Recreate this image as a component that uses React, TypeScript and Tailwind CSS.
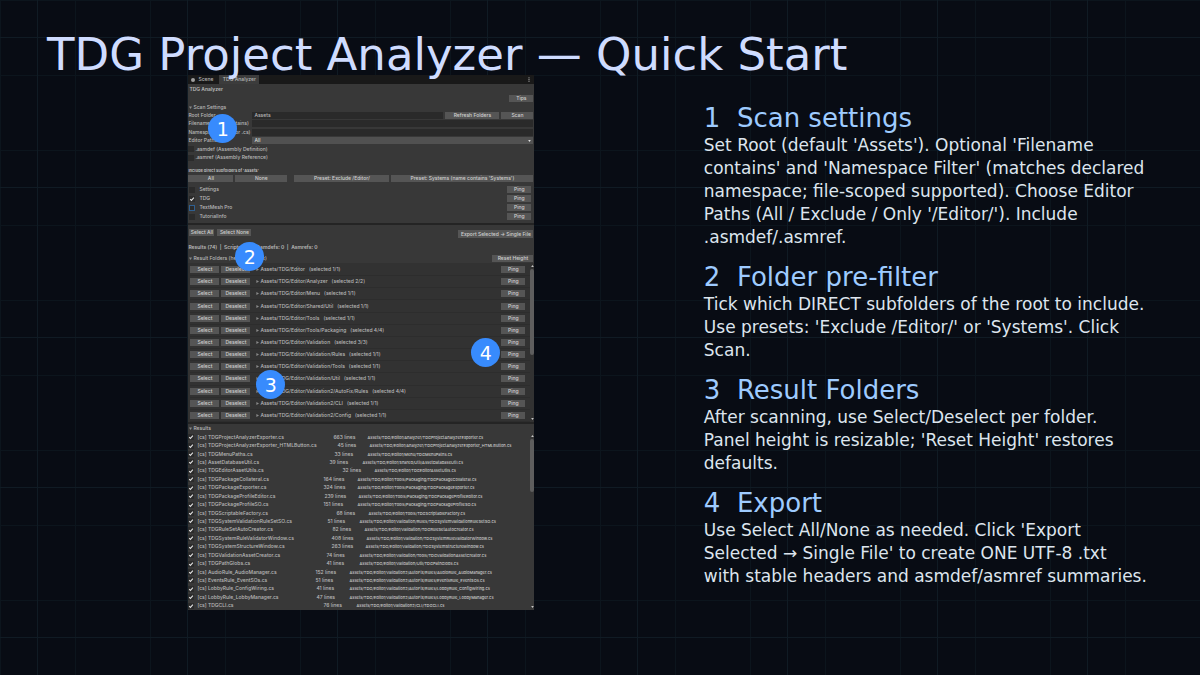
import type { ReactNode } from 'react'
import clsx from 'clsx'

const steps = [
  {
    title: 'Scan settings',
    text: "Set Root (default 'Assets'). Optional 'Filename contains' and 'Namespace Filter' (matches declared namespace; file-scoped supported). Choose Editor Paths (All / Exclude / Only '/Editor/'). Include .asmdef/.asmref.",
  },
  {
    title: 'Folder pre-filter',
    text: "Tick which DIRECT subfolders of the root to include. Use presets: 'Exclude /Editor/' or 'Systems'. Click Scan.",
  },
  {
    title: 'Result Folders',
    text: "After scanning, use Select/Deselect per folder. Panel height is resizable; 'Reset Height' restores defaults.",
  },
  {
    title: 'Export',
    text: "Use Select All/None as needed. Click 'Export Selected → Single File' to create ONE UTF-8 .txt with stable headers and asmdef/asmref summaries.",
  },
]

const subfolders = [
  { name: 'Settings', checked: false, focused: false },
  { name: 'TDG', checked: true, focused: false },
  { name: 'TextMesh Pro', checked: false, focused: true },
  { name: 'TutorialInfo', checked: false, focused: false },
]

const folders = [
  { path: 'Editor', selected: '1/1' },
  { path: 'Editor/Analyzer', selected: '2/2' },
  { path: 'Editor/Menu', selected: '1/1' },
  { path: 'Editor/Shared/Util', selected: '1/1' },
  { path: 'Editor/Tools', selected: '1/1' },
  { path: 'Editor/Tools/Packaging', selected: '4/4' },
  { path: 'Editor/Validation', selected: '3/3' },
  { path: 'Editor/Validation/Rules', selected: '1/1' },
  { path: 'Editor/Validation/Tools', selected: '1/1' },
  { path: 'Editor/Validation/Util', selected: '1/1' },
  { path: 'Editor/Validation2/AutoFix/Rules', selected: '4/4' },
  { path: 'Editor/Validation2/CLI', selected: '1/1' },
  { path: 'Editor/Validation2/Config', selected: '1/1' },
]

const files = [
  { name: 'TDGProjectAnalyzerExporter', dir: 'Editor/Analyzer', lines: 663, nameW: 136, linesW: 34 },
  { name: 'TDGProjectAnalyzerExporter_HTMLButton', dir: 'Editor/Analyzer', lines: 45, nameW: 140, linesW: 32 },
  { name: 'TDGMenuPaths', dir: 'Editor/Menu', lines: 33, nameW: 137, linesW: 33 },
  { name: 'AssetDatabaseUtil', dir: 'Editor/Shared/Util', lines: 39, nameW: 132, linesW: 33 },
  { name: 'TDGEditorAssetUtils', dir: 'Editor', lines: 32, nameW: 145, linesW: 32 },
  { name: 'TDGPackageCollateral', dir: 'Editor/Tools/Packaging', lines: 164, nameW: 126, linesW: 34 },
  { name: 'TDGPackageExporter', dir: 'Editor/Tools/Packaging', lines: 324, nameW: 126, linesW: 34 },
  { name: 'TDGPackageProfileEditor', dir: 'Editor/Tools/Packaging', lines: 239, nameW: 127, linesW: 34 },
  { name: 'TDGPackageProfileSO', dir: 'Editor/Tools/Packaging', lines: 151, nameW: 126, linesW: 34 },
  { name: 'TDGScriptableFactory', dir: 'Editor/Tools', lines: 68, nameW: 139, linesW: 32 },
  { name: 'TDGSystemValidationRuleSetSO', dir: 'Editor/Validation/Rules', lines: 51, nameW: 130, linesW: 32 },
  { name: 'TDGRuleSetAutoCreator', dir: 'Editor/Validation', lines: 82, nameW: 135, linesW: 32 },
  { name: 'TDGSystemRuleValidatorWindow', dir: 'Editor/Validation', lines: 408, nameW: 134, linesW: 35 },
  { name: 'TDGSystemStructureWindow', dir: 'Editor/Validation', lines: 263, nameW: 134, linesW: 34 },
  { name: 'TDGValidationAssetCreator', dir: 'Editor/Validation/Tools', lines: 74, nameW: 129, linesW: 33 },
  { name: 'TDGPathGlobs', dir: 'Editor/Validation/Util', lines: 41, nameW: 129, linesW: 33 },
  { name: 'AudioRule_AudioManager', dir: 'Editor/Validation2/AutoFix/Rules', lines: 152, nameW: 118, linesW: 34 },
  { name: 'EventsRule_EventSOs', dir: 'Editor/Validation2/AutoFix/Rules', lines: 51, nameW: 118, linesW: 34 },
  { name: 'LobbyRule_ConfigWiring', dir: 'Editor/Validation2/AutoFix/Rules', lines: 41, nameW: 119, linesW: 33 },
  { name: 'LobbyRule_LobbyManager', dir: 'Editor/Validation2/AutoFix/Rules', lines: 47, nameW: 119, linesW: 33 },
  { name: 'TDGCLI', dir: 'Editor/Validation2/CLI', lines: 76, nameW: 126, linesW: 33 },
]

function Btn({ className, children }: { className?: string; children: ReactNode }) {
  return (
    <button
      className={clsx(
        'flex h-[7px] shrink-0 items-center justify-center bg-[#555555] text-[#d0d0d0] whitespace-nowrap hover:bg-[#626262]',
        className,
      )}
    >
      {children}
    </button>
  )
}

function Tick({ id, checked, focused }: { id: string; checked?: boolean; focused?: boolean }) {
  return (
    <span className="relative flex size-[6px] shrink-0">
      <input
        id={id}
        type="checkbox"
        defaultChecked={checked}
        className={clsx(
          'peer size-[6px] appearance-none border bg-[#2b2b2b]',
          focused ? 'border-[#2f5f8f]' : 'border-[#2b2b2b]',
        )}
      />
      <svg
        viewBox="0 0 6 6"
        className="pointer-events-none absolute inset-0 hidden size-[6px] fill-none stroke-[#e0e0e0] peer-checked:block"
      >
        <path d="M1.2 3.2 2.4 4.4 4.9 1.6" strokeWidth="1.1" />
      </svg>
    </span>
  )
}

function Foldout({ open, children }: { open?: boolean; children?: ReactNode }) {
  return (
    <span className="flex items-center gap-px">
      <svg viewBox="0 0 4 4" className="size-[3px] shrink-0 fill-[#8a8a8a]">
        {open ? <path d="M0 .5h4L2 4z" /> : <path d="M.5 0v4L4 2z" />}
      </svg>
      {children}
    </span>
  )
}

function Scrollbar({ thumb }: { thumb: string }) {
  return (
    <div className="flex w-[4px] shrink-0 flex-col items-center justify-between py-[2px]">
      <svg viewBox="0 0 4 3" className="h-[2px] w-[3px] shrink-0 fill-[#c8c8c8]">
        <path d="M0 3h4L2 0z" />
      </svg>
      <div className="w-full flex-1 pt-[2px]">
        <div className={clsx('w-full rounded-[2px] bg-[#5e5e5e]', thumb)} />
      </div>
      <svg viewBox="0 0 4 3" className="h-[2px] w-[3px] shrink-0 fill-[#c8c8c8]">
        <path d="M0 0h4L2 3z" />
      </svg>
    </div>
  )
}

// numbered marker pinned over the editor window
function Pin({ n, className }: { n: number; className: string }) {
  return (
    <span
      className={clsx(
        'absolute flex size-[29px] items-center justify-center rounded-full bg-[#388bfd] pt-[2px] font-["DejaVu_Sans",sans-serif] text-[19px] font-normal text-white',
        className,
      )}
    >
      {n}
    </span>
  )
}

function ScanSettings() {
  return (
    <section className="pr-px">
      <div className="flex h-[11px] items-center pl-px font-semibold">TDG Analyzer</div>
      <div className="flex justify-end">
        <Btn className="w-[24px]">Tips</Btn>
      </div>
      <div className="mt-px flex h-[8px] items-center pl-px">
        <Foldout open>Scan Settings</Foldout>
      </div>
      <div className="grid h-[51px] auto-rows-fr items-center">
        <div className="flex items-center gap-px">
          <label htmlFor="root" className="w-[63px] shrink-0">Root Folder</label>
          <input id="root" defaultValue="Assets" className="h-[7px] min-w-0 flex-1 bg-[#2a2a2a] px-[2px]" />
          <Btn className="ml-px w-[54px]">Refresh Folders</Btn>
          <Btn className="ml-px w-[32px]">Scan</Btn>
        </div>
        <div className="flex items-center gap-px">
          <label htmlFor="filename" className="w-[63px] shrink-0 whitespace-nowrap">Filename Filter (contains)</label>
          <input id="filename" className="h-[7px] min-w-0 flex-1 bg-[#2a2a2a] px-[2px]" />
        </div>
        <div className="flex items-center gap-px">
          <label htmlFor="namespace" className="w-[63px] shrink-0 whitespace-nowrap">Namespace Filter (for .cs)</label>
          <input id="namespace" className="h-[7px] min-w-0 flex-1 bg-[#2a2a2a] px-[2px]" />
        </div>
        <div className="flex items-center gap-px">
          <label htmlFor="paths" className="w-[63px] shrink-0">Editor Paths</label>
          <div className="relative flex min-w-0 flex-1">
            <select id="paths" className="h-[7px] w-full appearance-none bg-[#515151] px-[2px] text-[#d8d8d8]">
              <option>All</option>
              <option>Exclude</option>
              <option>Only '/Editor/'</option>
            </select>
            <svg viewBox="0 0 4 3" className="pointer-events-none absolute top-[3px] right-[2px] h-[2px] w-[3px] fill-[#e0e0e0]">
              <path d="M0 0h4L2 3z" />
            </svg>
          </div>
        </div>
        <div className="flex items-center gap-px">
          <Tick id="asmdef" />
          <label htmlFor="asmdef">.asmdef (Assembly Definition)</label>
        </div>
        <div className="flex items-center gap-px">
          <Tick id="asmref" />
          <label htmlFor="asmref">.asmref (Assembly Reference)</label>
        </div>
      </div>

      <div className="mt-[4px] flex h-[8px] items-center text-[4px] font-bold">Include direct subfolders of 'Assets'</div>
      <div className="mt-px flex gap-[2px]">
        <Btn className="w-[45px]">All</Btn>
        <Btn className="w-[52px]">None</Btn>
        <Btn className="ml-[5px] w-[95px]">Preset: Exclude /Editor/</Btn>
        <Btn className="flex-1">Preset: Systems (name contains 'Systems')</Btn>
      </div>
      <ul className="mt-[3px] pb-[2px]">
        {subfolders.map((f) => (
          <li key={f.name} className="flex h-[9px] items-center gap-[4px] pr-[2px] pl-px">
            <Tick id={`sub-${f.name}`} checked={f.checked} focused={f.focused} />
            <label htmlFor={`sub-${f.name}`} className="flex-1">{f.name}</label>
            <Btn className="w-[24px]">Ping</Btn>
          </li>
        ))}
      </ul>
    </section>
  )
}

function ResultFolders() {
  return (
    <section>
      <div className="flex h-[14px] items-start gap-[3px] px-px pt-[4px]">
        <Btn className="w-[25px]">Select All</Btn>
        <Btn className="w-[34px]">Select None</Btn>
        <Btn className="mt-px ml-auto h-[8px] w-[75px]">Export Selected → Single File</Btn>
      </div>
      <div className="mt-[4px] flex h-[8px] items-center font-semibold whitespace-pre">
        {'Results (74)  |  Scripts: 74  |  Asmdefs: 0  |  Asmrefs: 0'}
      </div>
      <div className="mt-[3px] flex h-[9px] items-center justify-between px-px">
        <Foldout open>Result Folders (height: 360 px)</Foldout>
        <Btn className="w-[41px]">Reset Height</Btn>
      </div>
      <div className="flex h-[159px] bg-[#323232]">
        <ul className="grid min-w-0 flex-1 auto-rows-fr pt-px pl-[2px]">
          {folders.map((f) => (
            <li key={f.path} className="flex items-center gap-[2px] border-b border-[#2d2d2d] pr-[5px]">
              <Btn className="w-[29px]">Select</Btn>
              <Btn className="w-[29px]">Deselect</Btn>
              <div className="ml-[4px] flex-1 whitespace-pre">
                <Foldout>{`Assets/TDG/${f.path}   (selected ${f.selected})`}</Foldout>
              </div>
              <Btn className="w-[24px]">Ping</Btn>
            </li>
          ))}
        </ul>
        <Scrollbar thumb="h-[86px]" />
      </div>
    </section>
  )
}

function Results() {
  return (
    <section>
      <div className="flex h-[9px] items-center px-px">
        <Foldout open>Results</Foldout>
      </div>
      <div className="flex h-[177px]">
        <ul className="grid min-w-0 flex-1 auto-rows-fr">
          {files.map((f) => (
            <li key={f.name} className="flex items-center">
              <Tick id={`file-${f.name}`} checked />
              <label htmlFor={`file-${f.name}`} className="shrink-0 pl-[3px]" style={{ width: f.nameW + 3 }}>
                [cs] {f.name}.cs
              </label>
              <span className="shrink-0" style={{ width: f.linesW }}>
                {f.lines} lines
              </span>
              <span className="text-[4px] text-[#cccccc]">
                Assets/TDG/{f.dir}/{f.name}.cs
              </span>
            </li>
          ))}
        </ul>
        <Scrollbar thumb="h-[53px]" />
      </div>
    </section>
  )
}

function EditorWindow() {
  return (
    <div className='relative w-full max-w-[346px] self-start bg-[#383838] font-["Inter",sans-serif] text-[5px] leading-[7px] font-medium text-[#b8b8b8]'>
      <div className="flex h-[9px] items-stretch bg-[#191919]">
        <button className="flex items-center gap-[3px] px-[3px]">
          <span className="size-[4px] rounded-full bg-[#a0a0a0]" />
          Scene
        </button>
        <button className="ml-[3px] w-[40px] bg-[#3c3c3c]">TDG Analyzer</button>
        <button aria-label="Window menu" className="ml-auto flex items-center px-[4px]">
          <svg viewBox="0 0 2 6" className="h-[5px] w-[2px] fill-[#b8b8b8]">
            <circle cx="1" cy="1" r=".7" />
            <circle cx="1" cy="3" r=".7" />
            <circle cx="1" cy="5" r=".7" />
          </svg>
        </button>
      </div>
      <ScanSettings />
      <hr className="h-[2px] border-0 bg-[#242424]" />
      <ResultFolders />
      <hr className="h-[2px] border-0 bg-[#242424]" />
      <Results />
      <Pin n={1} className="top-[39px] left-[20px]" />
      <Pin n={2} className="top-[167px] left-[47px]" />
      <Pin n={3} className="top-[295px] left-[68px]" />
      <Pin n={4} className="top-[263px] left-[283px]" />
    </div>
  )
}

export default function App() {
  return (
    <div className='min-h-screen bg-[#080c14] bg-[linear-gradient(90deg,#101b24_1px,transparent_1px),linear-gradient(#101b24_1px,transparent_1px),linear-gradient(90deg,#0c151d_1px,transparent_1px),linear-gradient(#0c151d_1px,transparent_1px)] bg-[length:150px_150px,150px_150px,75px_75px,75px_75px] bg-[position:37px_37px,37px_37px,0_0,0_0] px-[47px] pt-[34px] font-["DejaVu_Sans",sans-serif]'>
      <h1 className="relative z-10 text-[45px] leading-[41px] text-[#cfdcff]">TDG Project Analyzer — Quick Start</h1>
      <main className="grid grid-cols-[7fr_5fr] gap-[28px]">
        <div className="flex justify-center">
          <EditorWindow />
        </div>
        <div className="flex flex-col gap-[13px] pt-[28px] pr-[5px]">
          {steps.map((step, index) => (
            <section key={step.title}>
              <h2 className="text-[26px] leading-[31px] whitespace-pre text-[#9ecbff]">
                {`${index + 1}  ${step.title}`}
              </h2>
              <p className="text-[17px] leading-[23px] text-[#dde5ee]">{step.text}</p>
            </section>
          ))}
        </div>
      </main>
    </div>
  )
}
